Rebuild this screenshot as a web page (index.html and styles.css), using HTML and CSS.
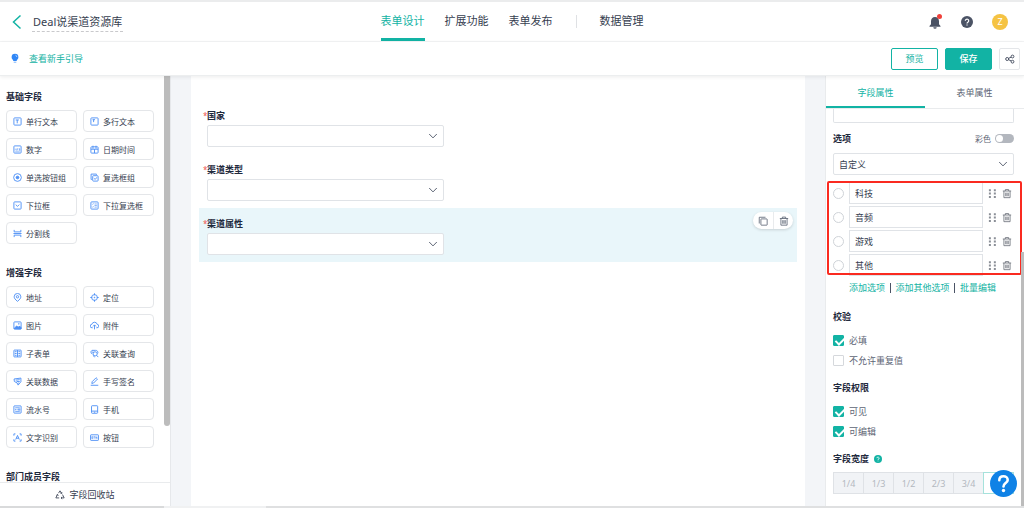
FILE: index.html
```html
<!DOCTYPE html>
<html lang="zh-CN">
<head>
<meta charset="utf-8">
<meta name="viewport" content="width=device-width, initial-scale=1">
<title>Deal说渠道资源库</title>
<link rel="stylesheet" href="styles.css">
</head>
<body>
<svg class="sprite" aria-hidden="true">
  <symbol id="i-down" viewBox="0 0 10 10"><path d="M1.200 3l3.800 3.900L8.800 3"/></symbol>
  <symbol id="i-text" viewBox="0 0 10 10"><rect x="1" y="1" width="8" height="8" rx=".8"/><path d="M3 3.300h3.500M4.700 3.300v3.700"/></symbol>
  <symbol id="i-area" viewBox="0 0 10 10"><rect x="1" y="1" width="8" height="8" rx=".8"/><path d="M2.800 3h2.800M4 3v2.700"/></symbol>
  <symbol id="i-num" viewBox="0 0 10 10"><rect x="1" y="1" width="8" height="8" rx=".8"/><path d="M2.500 4v2M4 4h1v1H4v1h1M6.300 4h1.200v2H6.300M6.500 5h1M2.500 7.500h5" stroke-width=".6"/></symbol>
  <symbol id="i-date" viewBox="0 0 10 10"><rect x="1" y="2" width="8" height="7" rx=".8"/><path d="M3.300.8v3.400M6.700.8v3.400M1 4.700h8M5 4.700V9"/></symbol>
  <symbol id="i-radio" viewBox="0 0 10 10"><circle cx="5" cy="5" r="4.300"/><circle cx="5" cy="5" r="1.500" class="solid"/></symbol>
  <symbol id="i-checks" viewBox="0 0 10 10"><rect x="3" y="3" width="6" height="6" rx=".8"/><path d="M2 7.200H1.200v-6h6V2M4.300 5.800l1.300 1.300L8 4.800"/></symbol>
  <symbol id="i-drop" viewBox="0 0 10 10"><rect x="1" y="1" width="8" height="8" rx=".8"/><path d="M3 4l2 2 2-2"/></symbol>
  <symbol id="i-dropm" viewBox="0 0 10 10"><rect x="1" y="1" width="8" height="8" rx=".8"/><path d="M2.400 3.200l.6.6.9-1.200M2.400 6.400l.6.6.9-1.200M5 3.300h2.600M5 5h2.600M5 6.800h2.600" stroke-width=".7"/></symbol>
  <symbol id="i-split" viewBox="0 0 10 10"><path d="M1.300 1v2.200h7.400V1M1.300 9V6.800h7.400V9M.5 5h9"/></symbol>
  <symbol id="i-pin" viewBox="0 0 10 10"><path d="M5 9.300C2.500 7.200 1.300 5.800 1.300 4.200a3.700 3.700 0 017.400 0C8.700 5.800 7.500 7.200 5 9.300z"/><circle cx="5" cy="4.200" r="1.300"/></symbol>
  <symbol id="i-target" viewBox="0 0 10 10"><circle cx="5" cy="5" r="3.200"/><circle cx="5" cy="5" r=".4" class="solid"/><path d="M5 .3v2.200M5 7.500v2.200M.3 5h2.200M7.500 5h2.200"/></symbol>
  <symbol id="i-img" viewBox="0 0 10 10"><rect x="1" y="1" width="8" height="8" rx=".8"/><path d="M1.200 8.500L4 5.500l1.800 1.500L7.200 5.500 9 7.500v1.300z" class="solid"/><circle cx="6.500" cy="3.200" r=".4"/></symbol>
  <symbol id="i-cloud" viewBox="0 0 10 10"><path d="M3 7.500H2.300A1.900 1.900 0 012 3.700a3.100 3.100 0 016 0 1.900 1.900 0 01-.3 3.800H7M5 9.300V4.500M3.400 6L5 4.300 6.600 6"/></symbol>
  <symbol id="i-sub" viewBox="0 0 10 10"><rect x="1" y="1.200" width="8" height="7.600" rx=".5"/><path d="M5 1.200v7.600M2 3h2M2 5h2M2 7h2M6 3h2M6 5h2M6 7h2"/></symbol>
  <symbol id="i-query" viewBox="0 0 10 10"><path d="M2.500 5.600A2.300 2.300 0 012.200 1.500h3.900A2.400 2.400 0 018.500 5"/><circle cx="5.700" cy="5.400" r="2.300"/><path d="M7.300 7l1.900 2M3.700 7.200L5 9.200M2 3.500h2"/></symbol>
  <symbol id="i-data" viewBox="0 0 10 10"><path d="M1.200 2.200L8.800 1.200v4L5.700 9 4.500 6.500 1.500 5z"/><path d="M3 3.500l4.500-.5M4 5h3.500M5.500 6.700h1"/></symbol>
  <symbol id="i-pen" viewBox="0 0 10 10"><path d="M2 7.200l.4-2L6.800.8l1.500 1.500L4 6.700zM.8 9.200h8.400"/></symbol>
  <symbol id="i-serial" viewBox="0 0 10 10"><rect x="1" y="1" width="8" height="8" rx=".5"/><path d="M2.500 3h5M2.500 7.200h5M2.800 4.200v1.700M4.500 4.200v1.700M6 4.300h1.500v1.500H6z" stroke-width=".8"/></symbol>
  <symbol id="i-phone" viewBox="0 0 10 10"><rect x="1.700" y=".8" width="6.800" height="8.400" rx=".8"/><path d="M1.700 6.800h6.800M4.500 8h1.200"/></symbol>
  <symbol id="i-ocr" viewBox="0 0 10 10"><path d="M1 3V1h1.700M7.300 1H9v2M9 7v2H7.300M2.700 9H1V7M3 7.300L5 2.700l2 4.600M3.700 5.800h2.600"/></symbol>
  <symbol id="i-btn" viewBox="0 0 10 10"><rect x=".6" y="2" width="8.800" height="6.200" rx=".6"/><path d="M2 4v2.200h1V4zM4 4.100h1.500M4.700 4.100v2.200M6.500 6.300V4l1.200 2.200V4" stroke-width=".7"/></symbol>
  <symbol id="i-trash" viewBox="0 0 12 12"><path d="M1 3h10M4 3V1.300h4V3M2.300 3v8h7.400V3M4.500 5v4.300M6 5v4.300M7.500 5v4.300"/></symbol>
  <symbol id="i-grip" viewBox="0 0 10 12"><path class="solid" stroke="none" d="M1 1.200h2.200v2.200H1zM6.500 1.200h2.200v2.200H6.500zM1 5h2.200v2.200H1zM6.500 5h2.200v2.200H6.500zM1 8.800h2.200V11H1zM6.500 8.800h2.200V11H6.500z"/></symbol>
</svg>

<header class="topbar">
  <div class="topbar-left">
    <button class="plain back" aria-label="返回"><svg viewBox="0 0 10 16"><path d="M8.500 1.500L1.500 8l7 6.500"/></svg></button>
    <span class="form-name">Deal说渠道资源库</span>
  </div>
  <nav class="main-nav">
    <a href="#" class="current">表单设计</a>
    <a href="#">扩展功能</a>
    <a href="#">表单发布</a>
    <span class="nav-rule"></span>
    <a href="#">数据管理</a>
  </nav>
  <div class="topbar-right">
    <button class="plain bell" aria-label="通知"><svg viewBox="0 0 14 16"><path d="M7 3c-2.500 0-4 1.800-4 4.200v3L1.500 12v.8h11V12L11 10.200v-3C11 4.800 9.500 3 7 3z" fill="#4b5365"/><path d="M5.300 13.300h3.400a1.700 1.500 0 01-3.400 0z" fill="#4b5365"/></svg><i class="dot"></i></button>
    <button class="plain q-dark" aria-label="帮助"><svg viewBox="0 0 12 12"><circle cx="6" cy="6" r="6" fill="#4b5365"/><path d="M4.300 4.700a1.700 1.600 0 113 1.100C6.500 6.300 6 6.500 6 7.500M6 8.500v1" fill="none" stroke="#fff" stroke-width="1.200"/></svg></button>
    <button class="plain avatar">Z</button>
  </div>
</header>

<div class="toolbar">
  <a href="#" class="guide"><svg viewBox="0 0 8 11"><path d="M4 .8a3.400 3.400 0 013.400 3.400C7.400 6 5.900 6.600 5.600 8H2.400C2.100 6.600.6 6 .6 4.200A3.400 3.400 0 014 .8z" fill="#2f86f6"/><path d="M2.700 8.700h2.600v1H2.700z" fill="#7db3fa"/><path d="M4.500 2.300a1.600 1.600 0 011.300 1.600" fill="none" stroke="#fff" stroke-width=".6"/></svg>查看新手引导</a>
  <div class="toolbar-actions">
    <button class="btn">预览</button>
    <button class="btn primary">保存</button>
    <button class="btn share" aria-label="分享"><svg viewBox="0 0 10 10"><circle cx="2.200" cy="5" r="1.500"/><circle cx="7.500" cy="2.500" r="1.400"/><circle cx="7.500" cy="7.700" r="1.400"/><path d="M3.500 4.400L6.200 3.100M3.500 5.600l2.700 1.400"/></svg></button>
  </div>
</div>

<div class="workspace">
  <aside class="palette">
    <div class="palette-list">
      <h2>基础字段</h2>
      <div class="chips">
        <button><svg><use href="#i-text"/></svg>单行文本</button>
        <button><svg><use href="#i-area"/></svg>多行文本</button>
        <button><svg><use href="#i-num"/></svg>数字</button>
        <button><svg><use href="#i-date"/></svg>日期时间</button>
        <button><svg><use href="#i-radio"/></svg>单选按钮组</button>
        <button><svg><use href="#i-checks"/></svg>复选框组</button>
        <button><svg><use href="#i-drop"/></svg>下拉框</button>
        <button><svg><use href="#i-dropm"/></svg>下拉复选框</button>
        <button><svg><use href="#i-split"/></svg>分割线</button>
      </div>
      <h2>增强字段</h2>
      <div class="chips">
        <button><svg><use href="#i-pin"/></svg>地址</button>
        <button><svg><use href="#i-target"/></svg>定位</button>
        <button><svg><use href="#i-img"/></svg>图片</button>
        <button><svg><use href="#i-cloud"/></svg>附件</button>
        <button><svg><use href="#i-sub"/></svg>子表单</button>
        <button><svg><use href="#i-query"/></svg>关联查询</button>
        <button><svg><use href="#i-data"/></svg>关联数据</button>
        <button><svg><use href="#i-pen"/></svg>手写签名</button>
        <button><svg><use href="#i-serial"/></svg>流水号</button>
        <button><svg><use href="#i-phone"/></svg>手机</button>
        <button><svg><use href="#i-ocr"/></svg>文字识别</button>
        <button><svg><use href="#i-btn"/></svg>按钮</button>
      </div>
      <h2>部门成员字段</h2>
    </div>
    <span class="thumb"></span>
    <button class="recycle"><svg viewBox="0 0 12 12"><path d="M4.200 3.800L6 1l1.900 3M9 5.500L11 9.500H7.500M5 9.500H1l2-4M6.400 3.700l1.600.5.300-1.600M8.600 8.200L7.200 9.500l1.400 1.300M1.700 6.300l1.400-.9.800 1.500"/></svg>字段回收站</button>
  </aside>

  <main class="stage">
    <div class="sheet">
      <div class="field">
        <label for="country"><i>*</i>国家</label>
        <div class="pick"><select id="country"><option></option></select><svg><use href="#i-down"/></svg></div>
      </div>
      <div class="field">
        <label for="ctype"><i>*</i>渠道类型</label>
        <div class="pick"><select id="ctype"><option></option></select><svg><use href="#i-down"/></svg></div>
      </div>
      <div class="field selected">
        <label for="cattr"><i>*</i>渠道属性</label>
        <div class="pick"><select id="cattr"><option></option></select><svg><use href="#i-down"/></svg></div>
        <div class="field-tools">
          <button aria-label="复制"><svg viewBox="0 0 12 12"><rect x="3.500" y="3.500" width="7.500" height="7.500" rx=".5"/><path d="M1.500 9V1.500H9"/></svg></button>
          <button aria-label="删除"><svg><use href="#i-trash"/></svg></button>
        </div>
      </div>
    </div>
  </main>

  <aside class="props">
    <div class="tabs">
      <button class="current">字段属性</button>
      <button>表单属性</button>
    </div>
    <div class="props-body">
      <div class="textarea-end"></div>
      <div class="row-head">
        <h3>选项</h3>
        <label class="colour">彩色<input type="checkbox" role="switch" class="switch"></label>
      </div>
      <div class="pick wide"><select aria-label="选项来源"><option>自定义</option></select><svg><use href="#i-down"/></svg></div>
      <div class="options">
        <div class="option"><input type="radio" name="opt" aria-label="默认科技"><input type="text" value="科技" aria-label="选项1"><svg class="grip"><use href="#i-grip"/></svg><button class="plain" aria-label="删除科技"><svg><use href="#i-trash"/></svg></button></div>
        <div class="option"><input type="radio" name="opt" aria-label="默认音频"><input type="text" value="音频" aria-label="选项2"><svg class="grip"><use href="#i-grip"/></svg><button class="plain" aria-label="删除音频"><svg><use href="#i-trash"/></svg></button></div>
        <div class="option"><input type="radio" name="opt" aria-label="默认游戏"><input type="text" value="游戏" aria-label="选项3"><svg class="grip"><use href="#i-grip"/></svg><button class="plain" aria-label="删除游戏"><svg><use href="#i-trash"/></svg></button></div>
        <div class="option"><input type="radio" name="opt" aria-label="默认其他"><input type="text" value="其他" aria-label="选项4"><svg class="grip"><use href="#i-grip"/></svg><button class="plain" aria-label="删除其他"><svg><use href="#i-trash"/></svg></button></div>
        <span class="callout"></span>
      </div>
      <div class="links"><a href="#">添加选项</a><span></span><a href="#">添加其他选项</a><span></span><a href="#">批量编辑</a></div>
      <h3>校验</h3>
      <div class="checks">
        <label><input type="checkbox" checked>必填</label>
        <label><input type="checkbox">不允许重复值</label>
      </div>
      <h3>字段权限</h3>
      <div class="checks">
        <label><input type="checkbox" checked>可见</label>
        <label><input type="checkbox" checked>可编辑</label>
      </div>
      <h3>字段宽度<svg class="tip" viewBox="0 0 12 12"><circle cx="6" cy="6" r="6" fill="#12b3a4"/><path d="M4.300 4.700a1.700 1.600 0 113 1.100C6.500 6.300 6 6.500 6 7.500M6 8.500v1" fill="none" stroke="#fff" stroke-width="1.200"/></svg></h3>
      <div class="widths">
        <button disabled>1/4</button><button disabled>1/3</button><button disabled>1/2</button><button disabled>2/3</button><button disabled>3/4</button><button class="on" aria-label="整行"></button>
      </div>
    </div>
    <span class="props-thumb"></span>
    <button class="plain support" aria-label="在线帮助"><svg viewBox="0 0 27 27"><circle cx="13.500" cy="13.500" r="13.500" fill="#0f82e6"/><path d="M9.300 10.200c0-2.600 1.900-4 4.200-4s4.200 1.400 4.200 3.700c0 3.100-4.200 3.300-4.200 6.600" fill="none" stroke="#fff" stroke-width="2.600" stroke-linecap="round"/><circle cx="13.500" cy="20.500" r="1.700" fill="#fff"/></svg></button>
  </aside>
</div>
<div class="bottom-edge"></div>
</body>
</html>
```
FILE: styles.css
```css
* { box-sizing: border-box; }

body {
  margin: 0;
  height: 100vh;
  display: flex;
  flex-direction: column;
  overflow: hidden;
  background: #fff;
  color: #363e50;
  font: 9px/13px "Noto Sans", "Noto Sans CJK SC", sans-serif;
}

button, input, select { font: inherit; color: inherit; margin: 0; }
button { cursor: pointer; padding: 0; }
a { color: inherit; text-decoration: none; }
h2, h3 { margin: 0; font-size: 9px; line-height: 13px; font-weight: 700; color: #1f2a3d; }
svg { display: block; flex: none; fill: none; stroke: currentColor; }
.solid { fill: currentColor; }
.sprite { position: absolute; width: 0; height: 0; }
.plain { border: 0; background: none; }

/* top bar */
.topbar {
  flex: none;
  height: 42px;
  display: grid;
  grid-template-columns: 1fr auto 1fr;
  border-bottom: 1px solid #f3f4f5;
  box-shadow: inset 0 2px #ebeced;
}
.topbar-left { display: flex; align-items: center; gap: 10px; padding: 2px 0 0 12px; }
.back { color: #12b3a4; }
.back svg { width: 10px; height: 16px; stroke-width: 1.5; }
.form-name {
  padding: 0 1px;
  font-size: 11px;
  line-height: 19px;
  border-bottom: 1px dashed #c9c9cc;
}
.main-nav { display: flex; align-items: center; gap: 20px; font-size: 11px; }
.main-nav a { line-height: 34px; padding-top: 4px; border-bottom: 3px solid transparent; }
.main-nav a.current { color: #12b3a4; border-color: #12b3a4; }
.nav-rule { width: 1px; height: 13px; margin: 2px 3px 0; background: #dfe1e4; }
.topbar-right { display: flex; align-items: center; justify-content: flex-end; gap: 19px; padding: 2px 16px 0 0; }
.topbar-right svg { stroke: none; }
.bell { position: relative; }
.bell svg { width: 14px; height: 16px; }
.dot { position: absolute; top: 0; right: 0; width: 5px; height: 5px; border-radius: 50%; background: #f0403a; }
.q-dark svg { width: 12px; height: 12px; }
.avatar { width: 16px; height: 16px; border-radius: 50%; background: #f5c343; color: #fff; line-height: 16px; }

/* toolbar */
.toolbar {
  flex: none;
  position: relative;
  z-index: 2;
  height: 34px;
  display: flex;
  align-items: center;
  justify-content: space-between;
  padding: 0 4px 0 11px;
  background: #fff;
  border-bottom: 1px solid #eceeef;
  box-shadow: 0 1px 4px rgba(0, 0, 0, .08);
}
.guide { display: flex; align-items: center; gap: 10px; color: #12b3a4; }
.guide svg { width: 8px; height: 11px; stroke: none; }
.toolbar-actions { display: flex; gap: 7px; }
.btn { width: 47px; height: 22px; border: 1px solid #12b3a4; border-radius: 2px; background: #fff; color: #12b3a4; }
.primary { background: #12b3a4; color: #fff; font-weight: 500; }
.share { width: 21px; display: grid; place-items: center; border-color: #e4e6e9; color: #4b5365; }
.share svg { width: 10px; height: 10px; }

.workspace { flex: 1; min-height: 0; display: flex; background: #f3f5f8; }

/* field palette */
.palette {
  position: relative;
  flex: none;
  width: 171px;
  display: flex;
  flex-direction: column;
  background: #fff;
  border-right: 1px solid #e6e8eb;
}
.palette-list { flex: 1; min-height: 0; overflow: hidden; padding: 14px 16px 0 6px; }
.palette h2 { margin-bottom: 7px; }
.chips { display: grid; grid-template-columns: 1fr 1fr; gap: 6px; margin-bottom: 22px; }
.chips button {
  height: 22px;
  display: flex;
  align-items: center;
  gap: 4px;
  padding: 0 6px;
  border: 1px solid #e4e6e9;
  border-radius: 4px;
  background: #fff;
  font-size: 8px;
}
.chips svg { width: 9px; height: 9px; color: #4a8df5; }
.thumb { position: absolute; top: 0; right: 0; width: 6px; height: 350px; border-radius: 0 0 3px 3px; background: #bcbcbc; }
.recycle {
  flex: none;
  height: 24px;
  display: flex;
  align-items: center;
  justify-content: center;
  gap: 4px;
  border: 0;
  border-top: 1px solid #e9ebed;
  background: #fff;
}
.recycle svg { width: 10px; height: 10px; }

/* form canvas */
.stage { flex: 1; display: flex; padding: 0 20px; }
.sheet { flex: 1; padding: 24px 8px 0; background: #fff; }
.field { position: relative; padding: 9px 8px 7px 4px; }
.field.selected { background: #e9f6fa; }
.field label { display: flex; margin-bottom: 3px; font-weight: 700; color: #1f2a3d; }
.field i { width: 4px; color: #f0554f; font-size: 8px; font-style: normal; font-weight: 400; }
.pick { position: relative; width: calc(40% + 3px); margin-left: 4px; }
.pick select {
  display: block;
  width: 100%;
  height: 22px;
  padding: 0 5px;
  appearance: none;
  border: 1px solid #e0e3e7;
  border-radius: 2px;
  background: #fff;
}
.pick svg { position: absolute; top: 6px; right: 6px; width: 10px; height: 10px; color: #5d6575; pointer-events: none; }
.field-tools {
  position: absolute;
  top: 4px;
  right: 4px;
  height: 17px;
  display: flex;
  border-radius: 9px;
  background: #fff;
  box-shadow: 0 1px 3px rgba(0, 0, 0, .15);
}
.field-tools button { width: 20px; display: grid; place-items: center; border: 0; background: none; color: #5d6575; }
.field-tools button + button { border-left: 1px solid #e9ebed; }
.field-tools svg { width: 10px; height: 10px; }

/* property panel */
.props { position: relative; flex: none; width: 199px; display: flex; flex-direction: column; background: #fff; border-left: 1px solid #e9ebed; }
.tabs { flex: none; display: flex; height: 33px; border-bottom: 1px solid #e9ebed; }
.tabs button { flex: 1; border: 0; border-top: 2px solid transparent; border-bottom: 2px solid transparent; background: none; color: #5d6575; }
.tabs .current { color: #12b3a4; border-bottom-color: #12b3a4; }
.props-body { flex: 1; min-height: 0; overflow: hidden; padding: 0 10px 0 7px; }
.textarea-end { height: 14px; border: 1px solid #e0e3e7; border-top: 0; border-radius: 0 0 2px 2px; }
.row-head { display: flex; align-items: center; justify-content: space-between; margin: 9px 0 8px; }
.colour { display: flex; align-items: center; gap: 4px; font-size: 8px; color: #5d6575; }
.switch { appearance: none; position: relative; width: 19px; height: 9px; border-radius: 5px; background: #b3b7be; }
.switch::before { content: ""; position: absolute; top: 1px; left: 1px; width: 7px; height: 7px; border-radius: 50%; background: #fff; }
.wide { width: auto; margin: 0; }
.options { position: relative; display: grid; grid-template-columns: minmax(0, 1fr); gap: 2px; margin-top: 7px; }
.option { display: flex; align-items: center; gap: 5px; color: #5d6575; }
.option input[type="radio"] { appearance: none; flex: none; width: 11px; height: 11px; border: 1px solid #cfd3d8; border-radius: 50%; background: #fff; }
.option input[type="text"] { flex: 1; min-width: 0; height: 22px; padding: 0 5px; border: 1px solid #e0e3e7; background: #fff; color: #363e50; }
.grip { width: 9px; height: 11px; color: #8b8f97; }
.option button { padding: 0 2px 0 0; color: #6b7079; }
.option button svg { width: 10px; height: 11px; }
.callout { position: absolute; inset: -1px -8px 1px -6px; border: 2px solid #fa2a20; border-radius: 2px; pointer-events: none; }
.links { display: flex; align-items: center; justify-content: space-between; margin: 5px 18px 0 16px; color: #12b3a4; }
.links span { width: 1px; height: 10px; background: #4b5365; }
.props h3 { display: flex; align-items: center; gap: 5px; }
.links + h3 { margin-top: 16px; }
.checks { display: grid; gap: 7px; margin: 11px 0 14px; color: #5d6575; }
.checks label { display: flex; align-items: center; gap: 5px; }
.checks input { appearance: none; position: relative; width: 11px; height: 11px; border: 1px solid #d5d8dc; border-radius: 1px; background: #fff; }
.checks input:checked { border-color: #12b3a4; background: #12b3a4; }
.checks input:checked::before {
  content: "";
  position: absolute;
  top: 0;
  left: 3px;
  width: 4px;
  height: 7px;
  border: solid #fff;
  border-width: 0 2px 2px 0;
  transform: rotate(45deg);
}
.tip { width: 8px; height: 8px; stroke: none; }
.widths { display: flex; margin-top: 7px; }
.widths button { flex: 1; height: 22px; border: 1px solid #dfe2e6; border-right: 0; background: #f1f3f6; color: #b3b8c0; }
.widths .on { border: 1px solid #a6e2dc; background: #fff; }
.props-thumb { position: absolute; right: 0; top: 176px; bottom: 0; width: 3px; background: #bcbcbc; }
.support { position: absolute; right: 7px; bottom: 9px; border-radius: 50%; }
.support svg { width: 27px; height: 27px; stroke: none; }

.bottom-edge { flex: none; height: 2px; background: linear-gradient(90deg, #d9dadb 16%, #f0f1f2 16% 26%, #dfe0e1 26%); }
```
